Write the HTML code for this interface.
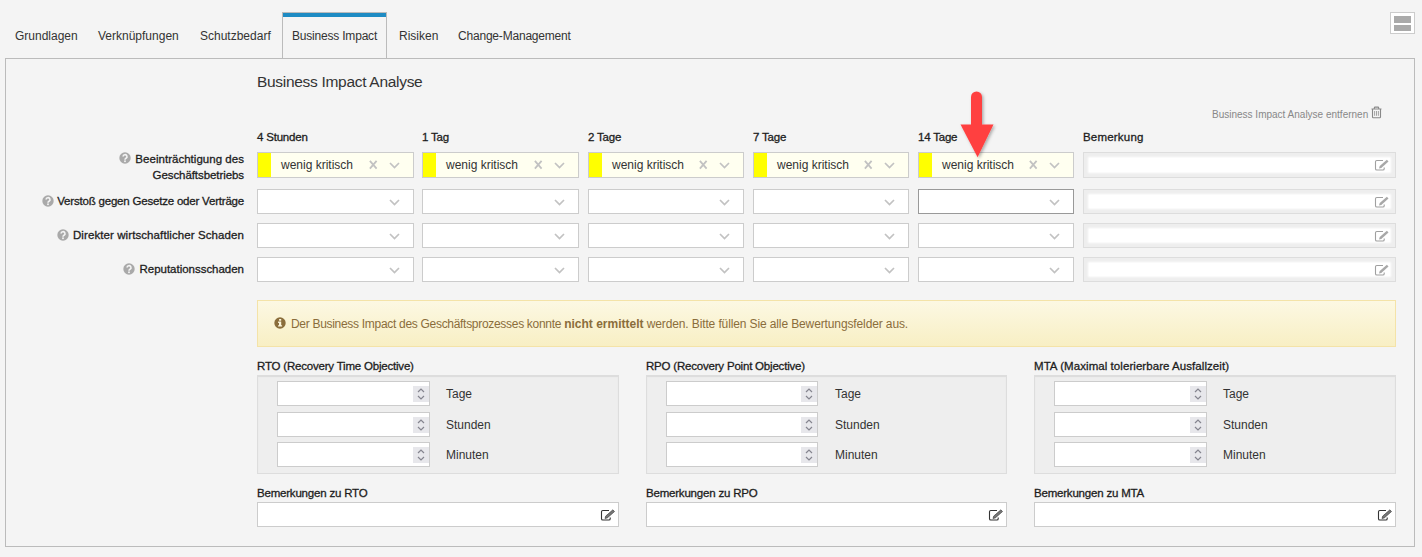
<!DOCTYPE html>
<html><head><meta charset="utf-8">
<style>
*{box-sizing:border-box;margin:0;padding:0}
html,body{width:1422px;height:557px;overflow:hidden;background:#f4f4f4;font-family:"Liberation Sans",sans-serif;color:#333;position:relative}
.a{position:absolute;white-space:nowrap}
.tab{position:absolute;top:29px;font-size:12px;line-height:14px;color:#333}
.panel{position:absolute;left:5px;top:58px;width:1410px;height:489px;border:1px solid #bbb;border-top:1px solid #bbb}
.acttab{position:absolute;left:282px;top:12px;width:105px;height:47px;background:#f4f4f4;border:1px solid #bbb;border-bottom:0;box-shadow:inset 0 4px #1e8bc3}
.h{font-size:15.5px;color:#333;letter-spacing:-0.3px}
.ch{font-size:11.5px;color:#1d1d1d;letter-spacing:-0.2px;-webkit-text-stroke:0.3px #1d1d1d}
.lbl{font-size:11.5px;color:#1d1d1d;letter-spacing:-0.2px;-webkit-text-stroke:0.3px #1d1d1d;text-align:right}
.sel{position:absolute;width:157px;height:26px;background:#fff;border:1px solid #ccc}
.sel.y{background:#fffff0}
.sel .yb{position:absolute;left:0;top:0;width:13px;height:24px;background:#ff0}
.sel .t{position:absolute;left:23px;top:5px;font-size:12px;line-height:14px;color:#333}
.sel .x{position:absolute;right:35.5px;top:7px;width:8.5px;height:9.5px}
.sel .cv{position:absolute;right:13px;top:8.5px;width:11px;height:7px}
.bem{position:absolute;left:1083px;width:313px;height:26px;border:1px solid #ddd;background:#eee}
.bem .in{position:absolute;left:5px;top:5px;right:5px;bottom:5px;background:#fff;box-shadow:0 0 2px 1px #fff}
.bem svg{position:absolute;left:290px;top:6px}
.q{position:absolute;width:11px;height:11px;border-radius:50%;background:#a8a8a8;color:#f4f4f4;font-size:9px;line-height:11px;text-align:center;font-weight:bold}
.alert{position:absolute;left:257px;top:300px;width:1139px;height:47px;border:1px solid #f4e3a8;background:linear-gradient(#fcf8e3,#f8efc4)}
.well{position:absolute;top:375px;width:362px;height:99px;background:#eee;border:1px solid #ddd;box-shadow:inset 0 1px 1px rgba(0,0,0,.08)}
.num{position:absolute;width:153px;height:25px;background:#fff;border:1px solid #ccc}
.num .sp{position:absolute;right:0;top:4px;width:16px;height:16px;background:#e7e7eb}
.unit{position:absolute;font-size:12px;color:#333}
.rem{position:absolute;top:502px;width:362px;height:25px;background:#fff;border:1px solid #ccc}
</style></head><body>
<!-- tabs -->
<div class="acttab"></div>
<div class="panel"></div>
<div class="a tab" style="left:15px">Grundlagen</div>
<div class="a tab" style="left:98px">Verknüpfungen</div>
<div class="a tab" style="left:200px">Schutzbedarf</div>
<div class="a tab" style="left:292px;letter-spacing:-0.2px">Business Impact</div>
<div class="a tab" style="left:399px">Risiken</div>
<div class="a tab" style="left:458px;letter-spacing:-0.2px">Change-Management</div>
<!-- top right icon -->
<div class="a" style="left:1390px;top:12px;width:25px;height:22px;border:1px solid #ccc;background:#fff">
  <div class="a" style="left:3px;top:3px;width:17px;height:6.5px;background:#aaa"></div>
  <div class="a" style="left:3px;top:11.5px;width:17px;height:6.5px;background:#aaa"></div>
</div>
<div class="a h" style="left:257px;top:73px">Business Impact Analyse</div>
<div class="a" style="left:1212px;top:109px;font-size:10px;color:#888">Business Impact Analyse entfernen</div>
<svg class="a" style="left:1371px;top:106px" width="11" height="13" viewBox="0 0 11 13"><path d="M0.5 3H10.5M3.3 3V1.9Q3.3 1.1 4.1 1.1H6.9Q7.7 1.1 7.7 1.9V3M1.5 3V10.9Q1.5 11.7 2.3 11.7H8.7Q9.5 11.7 9.5 10.9V3" stroke="#888" stroke-width="1.1" fill="none"/><path d="M3.6 5V9.8M5.5 5V9.8M7.4 5V9.8" stroke="#999" stroke-width="0.9"/></svg>
<div class="a ch" style="left:257px;top:131px">4 Stunden</div>
<div class="a ch" style="left:422px;top:131px">1 Tag</div>
<div class="a ch" style="left:588px;top:131px">2 Tage</div>
<div class="a ch" style="left:753px;top:131px">7 Tage</div>
<div class="a ch" style="left:918px;top:131px">14 Tage</div>
<div class="a ch" style="left:1083px;top:131px;letter-spacing:0.2px">Bemerkung</div>
<div class="sel y" style="left:257px;width:157px;top:152px;height:26px"><div class="yb"></div><div class="t">wenig kritisch</div><svg class="x" viewBox="0 0 8.5 9.5"><path d="M.9 .9L7.6 8.6M7.6 .9L.9 8.6" stroke="#c2c2c2" stroke-width="1.8" fill="none"/></svg><svg class="cv" viewBox="0 0 11 7"><path d="M1 1l4.5 4.5L10 1" stroke="#c2c2c2" stroke-width="1.7" fill="none"/></svg></div>
<div class="sel y" style="left:422px;width:157px;top:152px;height:26px"><div class="yb"></div><div class="t">wenig kritisch</div><svg class="x" viewBox="0 0 8.5 9.5"><path d="M.9 .9L7.6 8.6M7.6 .9L.9 8.6" stroke="#c2c2c2" stroke-width="1.8" fill="none"/></svg><svg class="cv" viewBox="0 0 11 7"><path d="M1 1l4.5 4.5L10 1" stroke="#c2c2c2" stroke-width="1.7" fill="none"/></svg></div>
<div class="sel y" style="left:588px;width:156px;top:152px;height:26px"><div class="yb"></div><div class="t">wenig kritisch</div><svg class="x" viewBox="0 0 8.5 9.5"><path d="M.9 .9L7.6 8.6M7.6 .9L.9 8.6" stroke="#c2c2c2" stroke-width="1.8" fill="none"/></svg><svg class="cv" viewBox="0 0 11 7"><path d="M1 1l4.5 4.5L10 1" stroke="#c2c2c2" stroke-width="1.7" fill="none"/></svg></div>
<div class="sel y" style="left:753px;width:156px;top:152px;height:26px"><div class="yb"></div><div class="t">wenig kritisch</div><svg class="x" viewBox="0 0 8.5 9.5"><path d="M.9 .9L7.6 8.6M7.6 .9L.9 8.6" stroke="#c2c2c2" stroke-width="1.8" fill="none"/></svg><svg class="cv" viewBox="0 0 11 7"><path d="M1 1l4.5 4.5L10 1" stroke="#c2c2c2" stroke-width="1.7" fill="none"/></svg></div>
<div class="sel y" style="left:918px;width:156px;top:152px;height:26px"><div class="yb"></div><div class="t">wenig kritisch</div><svg class="x" viewBox="0 0 8.5 9.5"><path d="M.9 .9L7.6 8.6M7.6 .9L.9 8.6" stroke="#c2c2c2" stroke-width="1.8" fill="none"/></svg><svg class="cv" viewBox="0 0 11 7"><path d="M1 1l4.5 4.5L10 1" stroke="#c2c2c2" stroke-width="1.7" fill="none"/></svg></div>
<div class="bem" style="top:152px;height:26px"><div class="in"></div><svg width="15" height="13" viewBox="0 0 15 13"><path d="M9 1.5H2.8Q1.5 1.5 1.5 2.8V9.7Q1.5 11 2.8 11H8.9Q10.2 11 10.2 9.7V8.6" stroke="#a0a0a0" stroke-width="1.1" fill="none"/><path d="M5.7 7.1L12.9 .8L14.5 2.6L7.3 8.9L5 9.5Z" fill="#a8a8a8"/></svg></div>
<div class="sel" style="left:257px;width:157px;top:189px;height:25px"><svg class="cv" viewBox="0 0 11 7"><path d="M1 1l4.5 4.5L10 1" stroke="#c2c2c2" stroke-width="1.7" fill="none"/></svg></div>
<div class="sel" style="left:422px;width:157px;top:189px;height:25px"><svg class="cv" viewBox="0 0 11 7"><path d="M1 1l4.5 4.5L10 1" stroke="#c2c2c2" stroke-width="1.7" fill="none"/></svg></div>
<div class="sel" style="left:588px;width:156px;top:189px;height:25px"><svg class="cv" viewBox="0 0 11 7"><path d="M1 1l4.5 4.5L10 1" stroke="#c2c2c2" stroke-width="1.7" fill="none"/></svg></div>
<div class="sel" style="left:753px;width:156px;top:189px;height:25px"><svg class="cv" viewBox="0 0 11 7"><path d="M1 1l4.5 4.5L10 1" stroke="#c2c2c2" stroke-width="1.7" fill="none"/></svg></div>
<div class="sel" style="left:918px;width:156px;top:189px;height:25px;border-color:#999"><svg class="cv" viewBox="0 0 11 7"><path d="M1 1l4.5 4.5L10 1" stroke="#c2c2c2" stroke-width="1.7" fill="none"/></svg></div>
<div class="bem" style="top:189px;height:25px"><div class="in"></div><svg width="15" height="13" viewBox="0 0 15 13"><path d="M9 1.5H2.8Q1.5 1.5 1.5 2.8V9.7Q1.5 11 2.8 11H8.9Q10.2 11 10.2 9.7V8.6" stroke="#a0a0a0" stroke-width="1.1" fill="none"/><path d="M5.7 7.1L12.9 .8L14.5 2.6L7.3 8.9L5 9.5Z" fill="#a8a8a8"/></svg></div>
<div class="sel" style="left:257px;width:157px;top:223px;height:25px"><svg class="cv" viewBox="0 0 11 7"><path d="M1 1l4.5 4.5L10 1" stroke="#c2c2c2" stroke-width="1.7" fill="none"/></svg></div>
<div class="sel" style="left:422px;width:157px;top:223px;height:25px"><svg class="cv" viewBox="0 0 11 7"><path d="M1 1l4.5 4.5L10 1" stroke="#c2c2c2" stroke-width="1.7" fill="none"/></svg></div>
<div class="sel" style="left:588px;width:156px;top:223px;height:25px"><svg class="cv" viewBox="0 0 11 7"><path d="M1 1l4.5 4.5L10 1" stroke="#c2c2c2" stroke-width="1.7" fill="none"/></svg></div>
<div class="sel" style="left:753px;width:156px;top:223px;height:25px"><svg class="cv" viewBox="0 0 11 7"><path d="M1 1l4.5 4.5L10 1" stroke="#c2c2c2" stroke-width="1.7" fill="none"/></svg></div>
<div class="sel" style="left:918px;width:156px;top:223px;height:25px"><svg class="cv" viewBox="0 0 11 7"><path d="M1 1l4.5 4.5L10 1" stroke="#c2c2c2" stroke-width="1.7" fill="none"/></svg></div>
<div class="bem" style="top:223px;height:25px"><div class="in"></div><svg width="15" height="13" viewBox="0 0 15 13"><path d="M9 1.5H2.8Q1.5 1.5 1.5 2.8V9.7Q1.5 11 2.8 11H8.9Q10.2 11 10.2 9.7V8.6" stroke="#a0a0a0" stroke-width="1.1" fill="none"/><path d="M5.7 7.1L12.9 .8L14.5 2.6L7.3 8.9L5 9.5Z" fill="#a8a8a8"/></svg></div>
<div class="sel" style="left:257px;width:157px;top:257px;height:25px"><svg class="cv" viewBox="0 0 11 7"><path d="M1 1l4.5 4.5L10 1" stroke="#c2c2c2" stroke-width="1.7" fill="none"/></svg></div>
<div class="sel" style="left:422px;width:157px;top:257px;height:25px"><svg class="cv" viewBox="0 0 11 7"><path d="M1 1l4.5 4.5L10 1" stroke="#c2c2c2" stroke-width="1.7" fill="none"/></svg></div>
<div class="sel" style="left:588px;width:156px;top:257px;height:25px"><svg class="cv" viewBox="0 0 11 7"><path d="M1 1l4.5 4.5L10 1" stroke="#c2c2c2" stroke-width="1.7" fill="none"/></svg></div>
<div class="sel" style="left:753px;width:156px;top:257px;height:25px"><svg class="cv" viewBox="0 0 11 7"><path d="M1 1l4.5 4.5L10 1" stroke="#c2c2c2" stroke-width="1.7" fill="none"/></svg></div>
<div class="sel" style="left:918px;width:156px;top:257px;height:25px"><svg class="cv" viewBox="0 0 11 7"><path d="M1 1l4.5 4.5L10 1" stroke="#c2c2c2" stroke-width="1.7" fill="none"/></svg></div>
<div class="bem" style="top:257px;height:25px"><div class="in"></div><svg width="15" height="13" viewBox="0 0 15 13"><path d="M9 1.5H2.8Q1.5 1.5 1.5 2.8V9.7Q1.5 11 2.8 11H8.9Q10.2 11 10.2 9.7V8.6" stroke="#a0a0a0" stroke-width="1.1" fill="none"/><path d="M5.7 7.1L12.9 .8L14.5 2.6L7.3 8.9L5 9.5Z" fill="#a8a8a8"/></svg></div>
<div class="a lbl" style="right:1178px;top:151px;line-height:16px"><span style="letter-spacing:0.03px">Beeinträchtigung des</span><br><span style="letter-spacing:-0.07px">Geschäftsbetriebs</span></div><svg class="a" style="left:119px;top:152.3px" width="12" height="12" viewBox="-6 -6 12 12"><circle r="5.7" fill="#a9a9a9"/><path d="M-1.9-1.4a1.95 1.95 0 1 1 2.9 1.7c-.7.4-1 .7-1 1.5" stroke="#f4f4f4" stroke-width="1.6" fill="none"/><circle cx="0" cy="3.3" r=".95" fill="#f4f4f4"/></svg>
<div class="a lbl" style="right:1178px;top:194px;line-height:15px">Verstoß gegen Gesetze oder Verträge</div><svg class="a" style="left:41.6px;top:194.6px" width="12" height="12" viewBox="-6 -6 12 12"><circle r="5.7" fill="#a9a9a9"/><path d="M-1.9-1.4a1.95 1.95 0 1 1 2.9 1.7c-.7.4-1 .7-1 1.5" stroke="#f4f4f4" stroke-width="1.6" fill="none"/><circle cx="0" cy="3.3" r=".95" fill="#f4f4f4"/></svg>
<div class="a lbl" style="right:1178px;top:228px;line-height:15px;letter-spacing:0.09px">Direkter wirtschaftlicher Schaden</div><svg class="a" style="left:57px;top:228.7px" width="12" height="12" viewBox="-6 -6 12 12"><circle r="5.7" fill="#a9a9a9"/><path d="M-1.9-1.4a1.95 1.95 0 1 1 2.9 1.7c-.7.4-1 .7-1 1.5" stroke="#f4f4f4" stroke-width="1.6" fill="none"/><circle cx="0" cy="3.3" r=".95" fill="#f4f4f4"/></svg>
<div class="a lbl" style="right:1178px;top:262px;line-height:15px;letter-spacing:-0.02px">Reputationsschaden</div><svg class="a" style="left:123.4px;top:262.5px" width="12" height="12" viewBox="-6 -6 12 12"><circle r="5.7" fill="#a9a9a9"/><path d="M-1.9-1.4a1.95 1.95 0 1 1 2.9 1.7c-.7.4-1 .7-1 1.5" stroke="#f4f4f4" stroke-width="1.6" fill="none"/><circle cx="0" cy="3.3" r=".95" fill="#f4f4f4"/></svg>
<div class="alert"><svg class="a" style="left:16px;top:16px" width="12" height="12" viewBox="-6 -6 12 12"><circle r="5.7" fill="#8a6d3b"/><path d="M-.9-4.1h2.1v1.9h-2.1zM-1.9-1.4h3.1v3.6h.9v1.3h-4v-1.3h.9v-2.3h-.9z" fill="#fcf6dc"/></svg><div class="a" style="left:33px;top:16px;font-size:12px;line-height:14px;color:#8a6d3b;letter-spacing:-0.3px">Der Business Impact des Geschäftsprozesses konnte <b style="letter-spacing:0">nicht ermittelt</b><span style="letter-spacing:-0.12px"> werden. Bitte füllen Sie alle Bewertungsfelder aus.</span></div></div>
<div class="a ch" style="left:257px;top:359.5px">RTO (Recovery Time Objective)</div>
<div class="well" style="left:257px"></div>
<div class="num" style="left:277px;top:381px"><div class="sp"><svg width="16" height="16" viewBox="0 0 16 16"><path d="M5 6l3-3 3 3M5 10l3 3 3-3" stroke="#85858f" stroke-width="1.2" fill="none"/></svg></div></div>
<div class="a unit" style="left:446px;top:387px">Tage</div>
<div class="num" style="left:277px;top:412px"><div class="sp"><svg width="16" height="16" viewBox="0 0 16 16"><path d="M5 6l3-3 3 3M5 10l3 3 3-3" stroke="#85858f" stroke-width="1.2" fill="none"/></svg></div></div>
<div class="a unit" style="left:446px;top:418px">Stunden</div>
<div class="num" style="left:277px;top:442px"><div class="sp"><svg width="16" height="16" viewBox="0 0 16 16"><path d="M5 6l3-3 3 3M5 10l3 3 3-3" stroke="#85858f" stroke-width="1.2" fill="none"/></svg></div></div>
<div class="a unit" style="left:446px;top:448px">Minuten</div>
<div class="a ch" style="left:257px;top:486.5px">Bemerkungen zu RTO</div>
<div class="rem" style="left:257px"><svg class="a" style="right:3px;top:5.5px" width="15" height="13" viewBox="0 0 15 13"><path d="M9 1.5H2.8Q1.5 1.5 1.5 2.8V9.7Q1.5 11 2.8 11H8.9Q10.2 11 10.2 9.7V8.6" stroke="#333" stroke-width="1.1" fill="none"/><path d="M5.7 7.1L12.9 .8L14.5 2.6L7.3 8.9L5 9.5Z" fill="#777" stroke="#333" stroke-width=".6"/></svg></div>
<div class="a ch" style="left:646px;top:359.5px">RPO (Recovery Point Objective)</div>
<div class="well" style="left:646px;width:361px"></div>
<div class="num" style="left:666px;top:381px;width:152px"><div class="sp"><svg width="16" height="16" viewBox="0 0 16 16"><path d="M5 6l3-3 3 3M5 10l3 3 3-3" stroke="#85858f" stroke-width="1.2" fill="none"/></svg></div></div>
<div class="a unit" style="left:835px;top:387px">Tage</div>
<div class="num" style="left:666px;top:412px;width:152px"><div class="sp"><svg width="16" height="16" viewBox="0 0 16 16"><path d="M5 6l3-3 3 3M5 10l3 3 3-3" stroke="#85858f" stroke-width="1.2" fill="none"/></svg></div></div>
<div class="a unit" style="left:835px;top:418px">Stunden</div>
<div class="num" style="left:666px;top:442px;width:152px"><div class="sp"><svg width="16" height="16" viewBox="0 0 16 16"><path d="M5 6l3-3 3 3M5 10l3 3 3-3" stroke="#85858f" stroke-width="1.2" fill="none"/></svg></div></div>
<div class="a unit" style="left:835px;top:448px">Minuten</div>
<div class="a ch" style="left:646px;top:486.5px">Bemerkungen zu RPO</div>
<div class="rem" style="left:646px;width:361px"><svg class="a" style="right:3px;top:5.5px" width="15" height="13" viewBox="0 0 15 13"><path d="M9 1.5H2.8Q1.5 1.5 1.5 2.8V9.7Q1.5 11 2.8 11H8.9Q10.2 11 10.2 9.7V8.6" stroke="#333" stroke-width="1.1" fill="none"/><path d="M5.7 7.1L12.9 .8L14.5 2.6L7.3 8.9L5 9.5Z" fill="#777" stroke="#333" stroke-width=".6"/></svg></div>
<div class="a ch" style="left:1034px;top:359.5px;letter-spacing:0.06px">MTA (Maximal tolerierbare Ausfallzeit)</div>
<div class="well" style="left:1034px"></div>
<div class="num" style="left:1054px;top:381px"><div class="sp"><svg width="16" height="16" viewBox="0 0 16 16"><path d="M5 6l3-3 3 3M5 10l3 3 3-3" stroke="#85858f" stroke-width="1.2" fill="none"/></svg></div></div>
<div class="a unit" style="left:1223px;top:387px">Tage</div>
<div class="num" style="left:1054px;top:412px"><div class="sp"><svg width="16" height="16" viewBox="0 0 16 16"><path d="M5 6l3-3 3 3M5 10l3 3 3-3" stroke="#85858f" stroke-width="1.2" fill="none"/></svg></div></div>
<div class="a unit" style="left:1223px;top:418px">Stunden</div>
<div class="num" style="left:1054px;top:442px"><div class="sp"><svg width="16" height="16" viewBox="0 0 16 16"><path d="M5 6l3-3 3 3M5 10l3 3 3-3" stroke="#85858f" stroke-width="1.2" fill="none"/></svg></div></div>
<div class="a unit" style="left:1223px;top:448px">Minuten</div>
<div class="a ch" style="left:1034px;top:486.5px">Bemerkungen zu MTA</div>
<div class="rem" style="left:1034px"><svg class="a" style="right:3px;top:5.5px" width="15" height="13" viewBox="0 0 15 13"><path d="M9 1.5H2.8Q1.5 1.5 1.5 2.8V9.7Q1.5 11 2.8 11H8.9Q10.2 11 10.2 9.7V8.6" stroke="#333" stroke-width="1.1" fill="none"/><path d="M5.7 7.1L12.9 .8L14.5 2.6L7.3 8.9L5 9.5Z" fill="#777" stroke="#333" stroke-width=".6"/></svg></div>
<svg class="a" style="left:955px;top:88px" width="45" height="72" viewBox="0 0 45 72"><defs><filter id="sh" x="-30%" y="-30%" width="160%" height="160%"><feDropShadow dx="1.5" dy="1.5" stdDeviation="1.5" flood-color="#000" flood-opacity="0.3"/></filter></defs><g filter="url(#sh)" fill="#ff4040"><rect x="16" y="3.5" width="11" height="40" rx="5.5"/><path d="M5.5 36.6H38.5L22.6 69.2z"/></g></svg>
</body></html>
